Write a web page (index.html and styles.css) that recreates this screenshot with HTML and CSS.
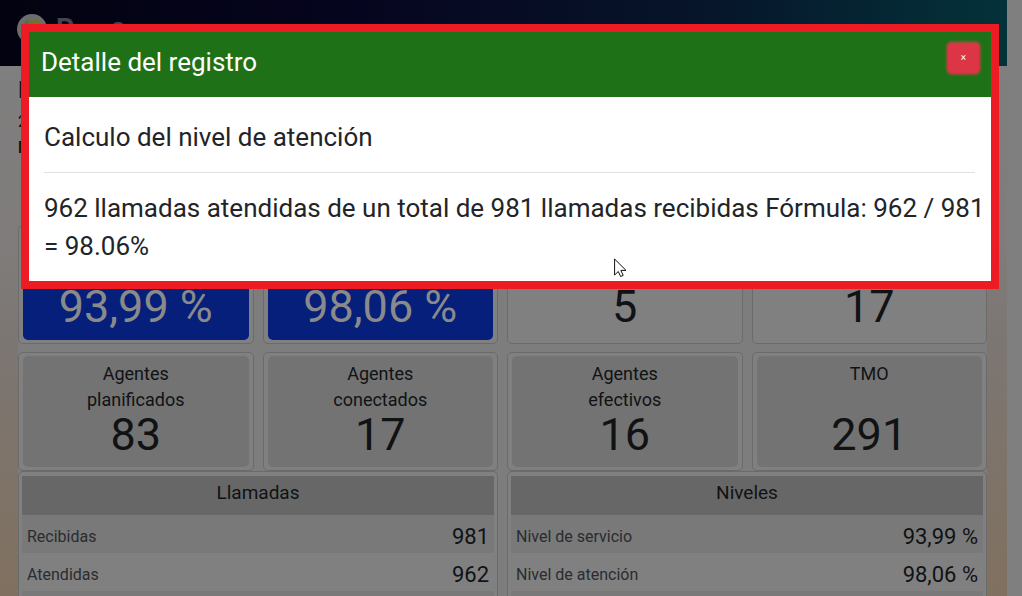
FILE: index.html
```
<!DOCTYPE html>
<html lang="es">
<head>
<meta charset="utf-8">
<meta name="viewport" content="width=device-width, initial-scale=1">
<title>Detalle del registro</title>
<link rel="stylesheet" href="styles.css">
</head>
<body>
<div class="shell">
  <div class="page">
    <header class="topbar">
      <svg class="logo" viewBox="0 0 32 32" aria-hidden="true"><circle cx="16" cy="16" r="15" fill="#6c6c6c"/><path d="M8 12q2-6 7-5l2 1q3-3 7 0v8H12z" fill="#77702d"/><path d="M8 12q1-5 5-5l-1 4z" fill="#4e6d65"/></svg>
      <span class="brand">P</span><span class="brand brand-small">C</span>
    </header>
    <main class="content">
      <div class="intro">
        <p class="intro-title">N</p>
        <p class="intro-line">2</p>
        <p class="intro-line intro-strong">N</p>
      </div>
      <section class="cards">
        <article class="card"><div class="tile tile-blue"><span class="value">93,99 %</span></div></article>
        <article class="card"><div class="tile tile-blue"><span class="value">98,06 %</span></div></article>
        <article class="card"><div class="tile"><span class="value">5</span></div></article>
        <article class="card"><div class="tile"><span class="value">17</span></div></article>
        <article class="card"><div class="tile tile-gray"><span class="label">Agentes<br>planificados</span><span class="value">83</span></div></article>
        <article class="card"><div class="tile tile-gray"><span class="label">Agentes<br>conectados</span><span class="value">17</span></div></article>
        <article class="card"><div class="tile tile-gray"><span class="label">Agentes<br>efectivos</span><span class="value">16</span></div></article>
        <article class="card"><div class="tile tile-gray"><span class="label">TMO</span><span class="value">291</span></div></article>
      </section>
      <section class="panels">
        <div class="panel">
          <table class="table">
            <thead><tr><th colspan="2">Llamadas</th></tr></thead>
            <tbody>
              <tr><td>Recibidas</td><td class="num">981</td></tr>
              <tr><td>Atendidas</td><td class="num">962</td></tr>
              <tr><td></td><td class="num"></td></tr>
            </tbody>
          </table>
        </div>
        <div class="panel">
          <table class="table">
            <thead><tr><th colspan="2">Niveles</th></tr></thead>
            <tbody>
              <tr><td>Nivel de servicio</td><td class="num">93,99 %</td></tr>
              <tr><td>Nivel de atención</td><td class="num">98,06 %</td></tr>
              <tr><td></td><td class="num"></td></tr>
            </tbody>
          </table>
        </div>
      </section>
    </main>
  </div>
  <div class="gutter"></div>
</div>
<div class="overlay">
  <div class="dialog" role="dialog" aria-modal="true" aria-labelledby="dialog-title">
    <div class="dialog-head">
      <h2 class="dialog-title" id="dialog-title">Detalle del registro</h2>
      <button class="close" type="button" aria-label="Cerrar">×</button>
    </div>
    <div class="dialog-body">
      <p class="dialog-text">Calculo del nivel de atención</p>
      <hr class="rule">
      <p class="dialog-text">962 llamadas atendidas de un total de 981 llamadas recibidas Fórmula: 962 / 981 = 98.06%</p>
    </div>
  </div>
</div>
<svg class="cursor" viewBox="0 0 12 19" aria-hidden="true"><path d="M.6 1v16l3.700-3.500 2.300 5 2.600-1.100-2.300-5H12z" fill="#fff" stroke="#111" stroke-width="1"/></svg>
</body>
</html>
```
FILE: styles.css
```
* { box-sizing: border-box; }
html, body { height: 100%; }
body {
  margin: 0;
  overflow: hidden;
  font-family: Roboto, "Liberation Sans", sans-serif;
  color: #101214;
}
p, h2 { margin: 0; }
.shell { display: flex; height: 100vh; overflow: hidden; }
.page {
  flex: 1;
  min-width: 0;
  background: linear-gradient(#7f7f7f 66px, #7f7c7b 240px, #7c7672 350px, #80705f 100%);
}
.gutter { width: 15px; background: #7f7f7f; }
.topbar {
  display: flex;
  height: 66px;
  padding: 13px 16px;
  background: linear-gradient(90deg, #020210, #06051f 35%, #06152a 70%, #04323a);
}
.logo { width: 32px; height: 32px; }
.brand { margin-left: 8px; font-size: 28px; line-height: 32px; font-weight: 700; color: #45454f; }
.brand-small { margin-left: 36px; line-height: 36px; font-size: 24px; }
.content { padding: 0 20px 0 18px; }
.intro { height: 159px; padding-top: 8px; }
.intro-title { font-size: 24px; line-height: 32px; font-weight: 500; }
.intro-line { font-size: 16px; line-height: 32px; }
.intro-strong { font-weight: 700; line-height: 20px; }
.cards {
  display: grid;
  grid-template-columns: repeat(4, 1fr);
  gap: 8px 9px;
  background: #7d7d7d;
}
.card {
  display: flex;
  height: 119px;
  padding: 3px 4px;
  border: 1px solid #6b6b6b;
  border-radius: 5px;
  background: #808080;
}
.tile {
  display: flex;
  flex: 1;
  flex-direction: column;
  justify-content: flex-end;
  align-items: center;
  border-radius: 5px;
}
.tile-gray { justify-content: space-between; padding: 5px 0 11px; background: #737373; }
.tile-blue { background: #051f7a; color: #8a8a8a; }
.label { font-size: 18px; line-height: 26px; text-align: center; }
.value { font-size: 45px; line-height: 66px; }
.tile-gray .value { line-height: 43px; }
.panels { display: grid; grid-template-columns: repeat(2, 1fr); gap: 9px; background: #7d7d7d; }
.panel {
  padding: 4px 3px;
  border: 1px solid #6b6b6b;
  border-radius: 5px;
  background: #808080;
}
.table { width: 100%; border-collapse: collapse; }
.table th {
  height: 39px;
  padding: 0 0 6px;
  background: #676767;
  font-size: 19px;
  font-weight: 400;
}
.table td { height: 38px; padding: 5px 5px 0; font-size: 16px; color: #292c30; }
.table tbody tr:nth-child(odd) { background: #797979; }
.table .num { font-size: 22px; text-align: right; color: #101214; }
.overlay { position: fixed; inset: 0; padding: 24px 23px 0 21px; }
.dialog { border: 8px solid #ed1c24; background: #fff; }
.dialog-head {
  display: flex;
  justify-content: space-between;
  align-items: flex-start;
  padding: 11px 12px 16px;
  background: #1e7117;
}
.dialog-title { font-size: 26px; line-height: 38px; font-weight: 400; color: #fff; }
.close {
  width: 31px;
  height: 30px;
  padding: 0;
  border: 0;
  border-radius: 4px;
  background: #dc3545;
  box-shadow: 0 0 2px 2px rgba(225, 63, 77, .6);
  color: #fff;
  font: 10px/30px Roboto, sans-serif;
}
.dialog-body { padding: 21px 4px 16px 15px; color: #212529; }
.dialog-text { font-size: 26px; line-height: 38px; }
.rule { margin: 16px 12px 16px 0; border: 0; border-top: 1px solid #e1e1e1; }
.cursor { position: absolute; left: 614px; top: 258px; width: 12px; height: 19px; }
```
